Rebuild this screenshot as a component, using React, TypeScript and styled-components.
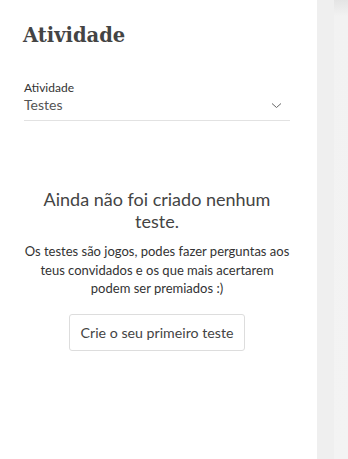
import React from 'react'
import styled, { createGlobalStyle } from 'styled-components'

const GlobalStyle = createGlobalStyle`
  html, body {
    margin: 0;
    padding: 0;
    background: #f0f0f0;
  }
  * {
    box-sizing: border-box;
  }
`

const Page = styled.div`
  display: flex;
  width: 348px;
  height: 459px;
  overflow: hidden;
  font-family: Lato, 'Liberation Sans', sans-serif;
`

const Sidebar = styled.aside`
  width: 317px;
  flex-shrink: 0;
  background: #ffffff;
  padding: 22px 27px 0 24px;
  display: flex;
  flex-direction: column;
`

const Gutter = styled.div`
  width: 17px;
  flex-shrink: 0;
  background: #efefef;
`

const Canvas = styled.div`
  flex: 1;
  background: linear-gradient(to bottom, #e4e4e4 0, #f2f2f2 16px, #f3f3f3 100%);
`

const Title = styled.h1`
  margin: 0 0 0 -1px;
  font-family: 'DejaVu Serif', 'Liberation Serif', serif;
  font-weight: bold;
  font-size: 19.5px;
  line-height: 28px;
  color: #444;
`

const Field = styled.div`
  margin-top: 30px;
  border-bottom: 1px solid #e2e2e2;
  padding-bottom: 5px;
`

const Label = styled.div`
  font-size: 12px;
  line-height: 15px;
  color: #333;
`

const SelectRow = styled.div`
  display: flex;
  align-items: center;
  justify-content: space-between;
  font-size: 14px;
  line-height: 20px;
  color: #555;
`

const Chevron = styled.svg`
  width: 11px;
  height: 7px;
  margin-right: 8px;
`

const Empty = styled.div`
  margin-top: 67px;
  display: flex;
  flex-direction: column;
  align-items: center;
  text-align: center;
`

const Heading = styled.h2`
  margin: 0;
  font-size: 18px;
  font-weight: 400;
  line-height: 22px;
  color: #444;
  padding: 0 14px;
`

const Text = styled.p`
  margin: 10px 0 0;
  font-size: 13px;
  line-height: 18.5px;
  color: #333;
`

const Button = styled.button`
  margin-top: 16px;
  height: 37px;
  padding: 0 11px;
  background: #fff;
  border: 1px solid #ddd;
  border-radius: 3px;
  font-family: inherit;
  font-size: 14.2px;
  color: #444;
`

export default function App() {
  return (
    <>
      <GlobalStyle />
      <Page>
        <Sidebar>
          <Title>Atividade</Title>
          <Field>
            <Label>Atividade</Label>
            <SelectRow>
              <span>Testes</span>
              <Chevron viewBox="0 0 11 7">
                <path d="M1 1.5l4.5 4L10 1.5" fill="none" stroke="#666" strokeWidth="1" />
              </Chevron>
            </SelectRow>
          </Field>
          <Empty>
            <Heading>Ainda não foi criado nenhum teste.</Heading>
            <Text>
              Os testes são jogos, podes fazer perguntas aos teus convidados e os que mais
              acertarem podem ser premiados :)
            </Text>
            <Button>Crie o seu primeiro teste</Button>
          </Empty>
        </Sidebar>
        <Gutter />
        <Canvas />
      </Page>
    </>
  )
}
